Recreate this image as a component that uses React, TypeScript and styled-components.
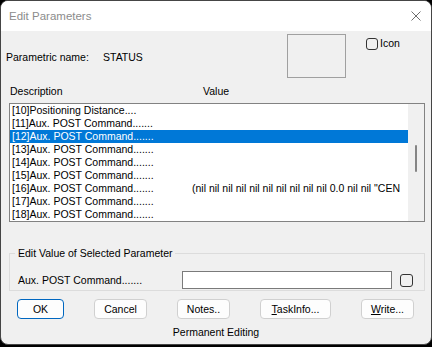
import styled, { createGlobalStyle } from 'styled-components';

const GlobalStyle = createGlobalStyle`
  html, body {
    margin: 0;
    padding: 0;
    background: #000;
  }
  body {
    font-family: 'Liberation Sans', Arial, sans-serif;
    font-size: 10.5px;
    color: #000;
  }
  * {
    box-sizing: border-box;
  }
`;

const Window = styled.div`
  width: 432px;
  height: 345px;
  border: 1px solid #454545;
  border-radius: 8px;
  overflow: hidden;
  background: #f0f0f0;
  display: flex;
  flex-direction: column;
`;

const TitleBar = styled.div`
  height: 30px;
  background: #fff;
  display: flex;
  align-items: center;
  justify-content: space-between;
  padding-left: 8px;
`;

const Title = styled.span`
  font-size: 11.5px;
  color: #8c8c8c;
`;

const CloseBox = styled.div`
  width: 30px;
  height: 30px;
  display: flex;
  align-items: center;
  justify-content: center;
`;

const HeaderRow = styled.div`
  height: 49px;
  display: grid;
  grid-template-columns: 97px 184px 59px auto;
  align-items: start;
  padding-left: 5px;
`;

const HeaderText = styled.span`
  margin-top: 20px;
  line-height: 13px;
`;

const PreviewBox = styled.div`
  margin-top: 3px;
  width: 59px;
  height: 44px;
  border: 1px solid #a0a0a0;
`;

const CheckLabel = styled.label`
  margin-top: 6px;
  margin-left: 20px;
  display: flex;
  align-items: center;
  gap: 2px;
  line-height: 13px;
`;

const CheckBox = styled.span<{ size?: number }>`
  display: inline-block;
  width: ${(p) => p.size ?? 12}px;
  height: ${(p) => p.size ?? 12}px;
  border: 1px solid #333;
  border-radius: 3px;
  background: transparent;
`;

const ColumnHeaders = styled.div`
  height: 23px;
  display: flex;
  align-items: center;
  padding-left: 9px;
`;

const ColumnHead = styled.span<{ width?: number }>`
  width: ${(p) => (p.width ? `${p.width}px` : 'auto')};
  line-height: 13px;
`;

const ListBox = styled.div`
  margin-left: 8px;
  width: 416px;
  height: 119px;
  border: 1px solid #828282;
  background: #fff;
  display: flex;
`;

const Rows = styled.div`
  flex: 1;
  overflow: hidden;
`;

const Row = styled.div<{ selected?: boolean }>`
  height: 13px;
  line-height: 13px;
  display: flex;
  white-space: nowrap;
  padding-left: 2px;
  background: ${(p) => (p.selected ? '#0078d7' : 'transparent')};
  color: ${(p) => (p.selected ? '#fff' : '#000')};
`;

const DescCell = styled.span`
  width: 180px;
  flex-shrink: 0;
`;

const ValueCell = styled.span`
  overflow: hidden;
`;

const ScrollBar = styled.div`
  width: 16px;
  background: #f0f0f0;
  padding-top: 41px;
  display: flex;
  justify-content: center;
`;

const Thumb = styled.div`
  width: 2px;
  height: 27px;
  border-radius: 1px;
  background: #858585;
`;

const GroupBox = styled.fieldset`
  margin: 24px 6px 0 8px;
  padding: 0 0 1px 5px;
  border: 1px solid #dcdcdc;
  min-inline-size: 0;
`;

const Legend = styled.legend`
  padding: 0 3px;
  line-height: 14px;
`;

const EditRow = styled.div`
  margin-top: 11px;
  height: 18px;
  display: flex;
  align-items: center;
`;

const EditLabel = styled.span`
  width: 167px;
  padding-left: 3px;
`;

const TextField = styled.div`
  width: 210px;
  height: 18px;
  border: 1px solid #7a7a7a;
  background: #fff;
  margin-right: 8px;
`;

const ButtonRow = styled.div`
  margin-top: 8px;
  padding-left: 16px;
  display: flex;
  gap: 30px;
`;

const Button = styled.button<{ width: number; primary?: boolean }>`
  width: ${(p) => p.width}px;
  height: 20px;
  padding: 0;
  font-family: inherit;
  font-size: 10.5px;
  color: #000;
  background: #fdfdfd;
  border: 1px solid ${(p) => (p.primary ? '#0067c0' : '#d0d0d0')};
  border-radius: 4px;
  line-height: 18px;
`;

const Footer = styled.div`
  margin-top: 7px;
  line-height: 13px;
  text-align: center;
`;

const descs = [
  '[10]Positioning Distance....',
  '[11]Aux. POST Command.......',
  '[12]Aux. POST Command.......',
  '[13]Aux. POST Command.......',
  '[14]Aux. POST Command.......',
  '[15]Aux. POST Command.......',
  '[16]Aux. POST Command.......',
  '[17]Aux. POST Command.......',
  '[18]Aux. POST Command.......',
];

const values: Record<number, string> = {
  6: '(nil nil nil nil nil nil nil nil nil nil 0.0 nil nil "CEN',
};

export default function App() {
  return (
    <>
      <GlobalStyle />
      <Window>
        <TitleBar>
          <Title>Edit Parameters</Title>
          <CloseBox>
            <svg width="10" height="10" viewBox="0 0 10 10">
              <path d="M0.5 0.5 L9.5 9.5 M9.5 0.5 L0.5 9.5" stroke="#6e6e6e" strokeWidth="1" fill="none" />
            </svg>
          </CloseBox>
        </TitleBar>

        <HeaderRow>
          <HeaderText>Parametric name:</HeaderText>
          <HeaderText>STATUS</HeaderText>
          <PreviewBox />
          <CheckLabel>
            <CheckBox />
            Icon
          </CheckLabel>
        </HeaderRow>

        <ColumnHeaders>
          <ColumnHead width={193}>Description</ColumnHead>
          <ColumnHead>Value</ColumnHead>
        </ColumnHeaders>

        <ListBox>
          <Rows>
            {descs.map((d, i) => (
              <Row key={d + i} selected={i === 2}>
                <DescCell>{d}</DescCell>
                <ValueCell>{values[i] ?? ''}</ValueCell>
              </Row>
            ))}
          </Rows>
          <ScrollBar>
            <Thumb />
          </ScrollBar>
        </ListBox>

        <GroupBox>
          <Legend>Edit Value of Selected Parameter</Legend>
          <EditRow>
            <EditLabel>Aux. POST Command.......</EditLabel>
            <TextField />
            <CheckBox size={13} />
          </EditRow>
        </GroupBox>

        <ButtonRow>
          <Button width={47} primary>OK</Button>
          <Button width={53}>Cancel</Button>
          <Button width={53}>Notes..</Button>
          <Button width={71}>
            <u>T</u>askInfo...
          </Button>
          <Button width={53}>
            <u>W</u>rite...
          </Button>
        </ButtonRow>

        <Footer>Permanent Editing</Footer>
      </Window>
    </>
  );
}
